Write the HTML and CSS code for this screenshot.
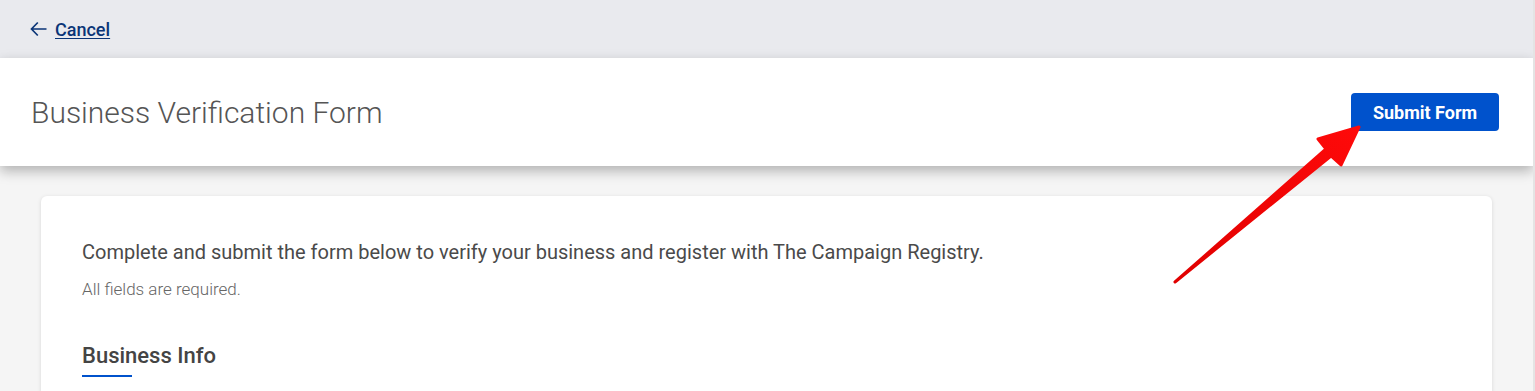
FILE: index.html
```html
<!DOCTYPE html>
<html lang="en">
<head>
  <meta charset="UTF-8">
  <meta name="viewport" content="width=device-width, initial-scale=1.0">
  <title>Business Verification Form</title>
  <link rel="stylesheet" href="styles.css">
</head>
<body>

<div class="top-bar">
  <a href="#" class="back-link">
    <svg class="back-icon" width="17" height="16" viewBox="0 0 17 16">
      <path d="M16.5 8H2M7.8 1.5L1.5 8l6.3 6.5" fill="none" stroke="#0b3577" stroke-width="1.7"/>
    </svg>
    <span>Cancel</span>
  </a>
</div>

<header class="page-header">
  <h1 class="page-title">Business Verification Form</h1>
  <button class="submit-btn">Submit Form</button>
</header>

<main class="content">
  <section class="card">
    <p class="intro">Complete and submit the form below to verify your business and register with The Campaign Registry.</p>
    <p class="note">All fields are required.</p>
    <h2 class="section-title">Business Info</h2>
  </section>
</main>

<!-- annotation arrow -->
<svg class="pointer" width="1535" height="391" viewBox="0 0 1535 391">
  <defs>
    <linearGradient id="arrowFill" x1="0" y1="1" x2="1" y2="0">
      <stop offset="0" stop-color="#e00000"/>
      <stop offset="1" stop-color="#ff0a0a"/>
    </linearGradient>
  </defs>
  <polygon points="1175,282 1331,156 1341,165 1359,127 1318,139 1326,149"
           fill="url(#arrowFill)" stroke="url(#arrowFill)" stroke-width="3" stroke-linejoin="round"/>
</svg>

</body>
</html>
```

FILE: styles.css
```css
* {
  box-sizing: border-box;
  margin: 0;
  padding: 0;
}

body {
  font-family: Roboto, 'Liberation Sans', sans-serif;
  background: #f5f5f5;
  color: #444;
  height: 391px;
  overflow: hidden;
  position: relative;
  border-right: 2px solid #e4e4e4;
}

.top-bar {
  height: 58px;
  background: #e9eaee;
  display: flex;
  align-items: center;
  padding-left: 30px;
}

.back-link {
  display: flex;
  align-items: center;
  gap: 8px;
  color: #0b3577;
  font-size: 18px;
  font-weight: 500;
  text-decoration: underline;
  text-underline-offset: 2px;
}

.back-icon {
  display: block;
}

.page-header {
  height: 108px;
  background: #fff;
  display: flex;
  align-items: center;
  justify-content: space-between;
  padding: 0 34px 0 31px;
  box-shadow: 0 5px 12px rgba(0,0,0,0.28);
  position: relative;
  z-index: 2;
}

.page-title {
  font-size: 30px;
  font-weight: 300;
  color: #555;
}

.submit-btn {
  width: 148px;
  height: 38px;
  background: #0052cc;
  color: #fff;
  border: none;
  border-radius: 4px;
  font-family: Roboto, 'Liberation Sans', sans-serif;
  font-size: 18px;
  font-weight: 700;
  cursor: pointer;
}

.content {
  padding: 30px 41px 0;
}

.card {
  background: #fff;
  border-radius: 6px;
  box-shadow: 0 1px 4px rgba(0,0,0,0.12);
  padding: 42px 41px 0;
  height: 200px;
}

.intro {
  font-size: 20px;
  color: #4a4a4a;
  line-height: 28px;
}

.note {
  font-size: 17px;
  font-weight: 300;
  color: #666;
  line-height: 20px;
  margin-top: 13px;
}

.section-title {
  font-size: 22px;
  font-weight: 500;
  color: #444;
  line-height: 26px;
  margin-top: 44px;
}

.section-title::after {
  content: "";
  display: block;
  width: 50px;
  height: 2px;
  background: #0052cc;
  margin-top: 6px;
}

.pointer {
  position: absolute;
  top: 0;
  left: 0;
  z-index: 5;
  pointer-events: none;
}
```
